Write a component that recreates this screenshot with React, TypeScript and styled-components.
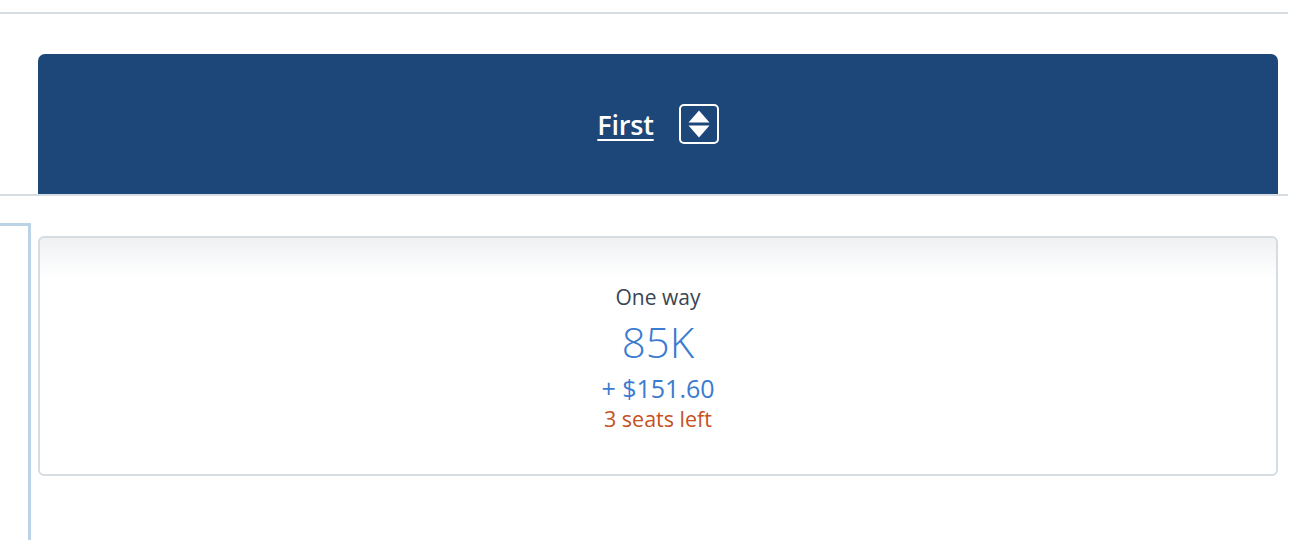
import { createGlobalStyle } from 'styled-components';
import styled from 'styled-components';

const GlobalStyle = createGlobalStyle`
  html, body {
    margin: 0;
    padding: 0;
    background: #ffffff;
  }
  body {
    font-family: 'Open Sans', 'Noto Sans', sans-serif;
    -webkit-font-smoothing: antialiased;
  }
`;

const Page = styled.div`
  width: 1314px;
  height: 540px;
  overflow: hidden;
  padding-top: 12px;
  box-sizing: border-box;
`;

const Rule = styled.div`
  width: 1288px;
  height: 2px;
  background: #d6dee3;
`;

const HeaderRow = styled.div`
  padding: 40px 0 0 38px;
`;

const CabinBanner = styled.div`
  width: 1240px;
  height: 140px;
  background: #1d4679;
  border-radius: 7px 7px 0 0;
  display: flex;
  align-items: center;
  justify-content: center;
  gap: 25px;
`;

const CabinName = styled.a`
  color: #ffffff;
  font-size: 27px;
  font-weight: 600;
  text-decoration: underline;
  text-decoration-thickness: 2px;
  text-underline-offset: 4px;
  letter-spacing: -0.2px;
  cursor: pointer;
`;

const SortButton = styled.button`
  width: 40px;
  height: 40px;
  box-sizing: border-box;
  border: 2px solid #ffffff;
  border-radius: 5px;
  background: transparent;
  padding: 0;
  display: flex;
  align-items: center;
  justify-content: center;
`;

const Body = styled.div`
  display: flex;
  gap: 7px;
`;

const Bracket = styled.div`
  width: 28px;
  height: 320px;
  margin-top: 27px;
  border-top: 3px solid #bcd3e7;
  border-right: 3px solid #bcd3e7;
  flex-shrink: 0;
`;

const FareCard = styled.div`
  width: 1240px;
  height: 240px;
  margin-top: 40px;
  box-sizing: border-box;
  border: 2px solid #d5dde3;
  border-radius: 6px;
  background: linear-gradient(#eff1f3 0px, #ffffff 42px);
  display: flex;
  flex-direction: column;
  align-items: center;
  padding-top: 45px;
`;

const FareLabel = styled.div`
  color: #3a4552;
  font-size: 21px;
  line-height: 28px;
`;

const Miles = styled.div`
  color: #3b7bd0;
  font-size: 42px;
  font-weight: 300;
  line-height: 50px;
  margin-top: 6px;
`;

const Taxes = styled.div`
  color: #3b7bd0;
  font-size: 25px;
  line-height: 34px;
  margin-top: 4px;
`;

const SeatsLeft = styled.div<{ $urgent?: boolean }>`
  color: ${(p) => (p.$urgent ? '#c4521f' : '#3a4552')};
  font-size: 21.5px;
  line-height: 28px;
`;

function SortIcon() {
  return (
    <svg width="22" height="28" viewBox="0 0 22 28" fill="#ffffff">
      <path d="M11 0.5 L21.5 12.5 L0.5 12.5 Z" />
      <path d="M0.5 15.5 L21.5 15.5 L11 27.5 Z" />
    </svg>
  );
}

export default function App() {
  return (
    <Page>
      <GlobalStyle />
      <Rule />
      <HeaderRow>
        <CabinBanner>
          <CabinName>First</CabinName>
          <SortButton aria-label="Sort">
            <SortIcon />
          </SortButton>
        </CabinBanner>
      </HeaderRow>
      <Rule />
      <Body>
        <Bracket />
        <FareCard>
          <FareLabel>One way</FareLabel>
          <Miles>85K</Miles>
          <Taxes>+ $151.60</Taxes>
          <SeatsLeft $urgent>3 seats left</SeatsLeft>
        </FareCard>
      </Body>
    </Page>
  );
}
